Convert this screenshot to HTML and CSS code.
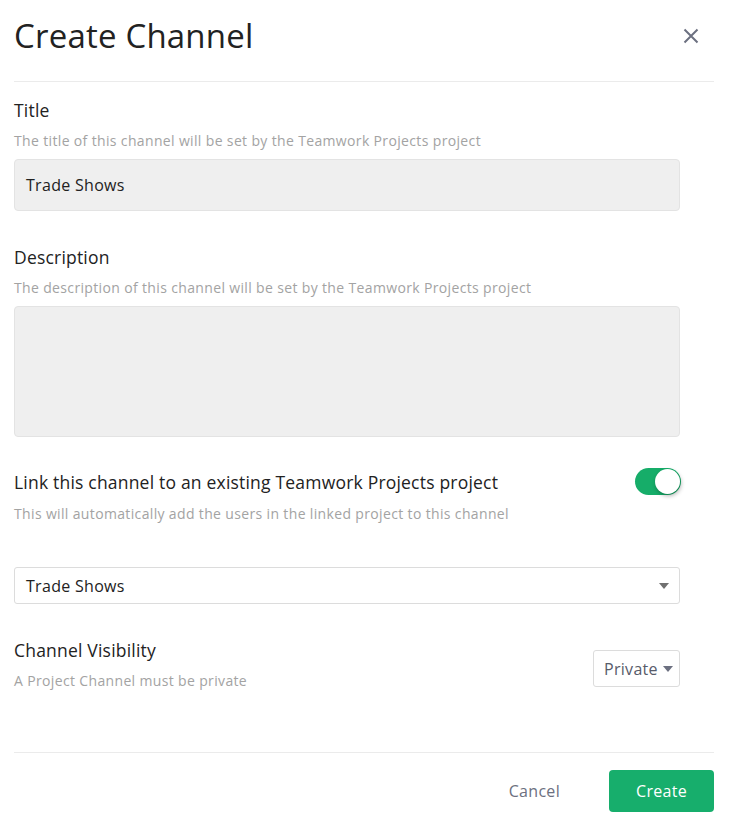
FILE: index.html
```html
<!DOCTYPE html>
<html>
<head>
<meta charset="utf-8">
<link rel="stylesheet" href="styles.css">
</head>
<body>
<div class="modal">
  <header class="head">
    <h1 class="title">Create Channel</h1>
    <button class="close" aria-label="Close">
      <svg width="16" height="16" viewBox="0 0 16 16"><path d="M1.5 1.5 L14.5 14.5 M14.5 1.5 L1.5 14.5" stroke="#6c7080" stroke-width="2" fill="none"/></svg>
    </button>
  </header>
  <div class="body">
    <section class="field f-title">
      <div class="label">Title</div>
      <div class="help">The title of this channel will be set by the Teamwork Projects project</div>
      <div class="input">Trade Shows</div>
    </section>
    <section class="field f-desc">
      <div class="label">Description</div>
      <div class="help">The description of this channel will be set by the Teamwork Projects project</div>
      <div class="textarea"></div>
    </section>
    <section class="field f-link">
      <div class="row">
        <div class="label">Link this channel to an existing Teamwork Projects project</div>
        <div class="toggle"><span class="knob"></span></div>
      </div>
      <div class="help">This will automatically add the users in the linked project to this channel</div>
    </section>
    <div class="select">
      <span>Trade Shows</span>
      <span class="caret"></span>
    </div>
    <section class="field f-vis">
      <div class="vis-text">
        <div class="label">Channel Visibility</div>
        <div class="help">A Project Channel must be private</div>
      </div>
      <div class="small-select"><span>Private</span><span class="caret"></span></div>
    </section>
  </div>
  <footer class="foot">
    <button class="cancel">Cancel</button>
    <button class="create">Create</button>
  </footer>
</div>
</body>
</html>
```
FILE: styles.css
```css
* { box-sizing: border-box; }
html, body { margin: 0; padding: 0; background: #fff; }
body {
  font-family: "Open Sans", "Noto Sans", sans-serif;
  color: #222;
}
.modal { width: 700px; margin-left: 14px; }
.head {
  height: 82px;
  display: flex;
  align-items: flex-start;
  justify-content: space-between;
  border-bottom: 1px solid #ebebeb;
}
.title {
  margin: 0;
  padding-top: 14px;
  font-size: 33px;
  font-weight: 400;
  line-height: 44px;
  color: #222;
  letter-spacing: 0.2px;
}
.close {
  border: 0; background: none; padding: 0;
  margin-top: 28px; margin-right: 15px;
  width: 16px; height: 16px;
}
.close svg { display: block; }
.body { width: 666px; padding-top: 16px; }
.label { font-size: 17.5px; line-height: 24px; color: #222; letter-spacing: 0.2px; }
.help { font-size: 14px; line-height: 20px; color: #a3a3a3; margin-top: 9px; letter-spacing: 0.35px; }
.input {
  margin-top: 8px;
  height: 52px;
  background: #efefef;
  border: 1px solid #e3e3e3;
  border-radius: 4px;
  padding: 0 11px;
  display: flex; align-items: center;
  font-size: 16px; color: #222; letter-spacing: 0.3px;
}
.f-desc { margin-top: 34px; }
.textarea {
  margin-top: 8px;
  height: 131px;
  background: #efefef;
  border: 1px solid #e3e3e3;
  border-radius: 4px;
}
.f-link { margin-top: 31px; }
.row { display: flex; justify-content: space-between; align-items: center; }
.toggle {
  width: 46px; height: 27px;
  background: #16ad69;
  border-radius: 14px;
  position: relative;
  margin-right: -1px;
}
.knob {
  position: absolute; right: 1px; top: 1px;
  width: 25px; height: 25px; border-radius: 50%;
  background: #fff;
  box-shadow: 1px 2px 4px rgba(0,0,0,0.3);
}
.f-link .help { margin-top: 9px; }
.select {
  margin-top: 43px;
  height: 37px;
  border: 1px solid #dcdcdc;
  border-radius: 3px;
  display: flex; align-items: center; justify-content: space-between;
  padding: 0 10px 0 11px;
  font-size: 16px; color: #222; letter-spacing: 0.3px;
}
.caret {
  width: 0; height: 0;
  border-left: 5px solid transparent;
  border-right: 5px solid transparent;
  border-top: 6px solid #707070;
}
.f-vis {
  margin-top: 34px;
  display: flex; justify-content: space-between; align-items: flex-start;
}
.small-select {
  margin-top: 12px;
  height: 37px; width: 87px;
  border: 1px solid #dcdcdc;
  border-radius: 3px;
  display: flex; align-items: center; justify-content: space-between;
  padding: 0 6px 0 10px;
  font-size: 16px; color: #575b6a; letter-spacing: 0.3px;
}
.small-select .caret { border-top-color: #6c7080; }
.foot {
  margin-top: 61px;
  border-top: 1px solid #ebebeb;
  padding-top: 17px;
  display: flex; justify-content: flex-end; align-items: center;
}
.cancel {
  border: 0; background: none; padding: 0;
  font-family: inherit; font-size: 16px; color: #6c7080; letter-spacing: 0.3px;
  margin-right: 49px;
}
.create {
  border: 0; border-radius: 4px;
  background: #17ae6c; color: #fff;
  font-family: inherit; font-size: 16px; letter-spacing: 0.3px;
  width: 105px; height: 42px;
}
```
